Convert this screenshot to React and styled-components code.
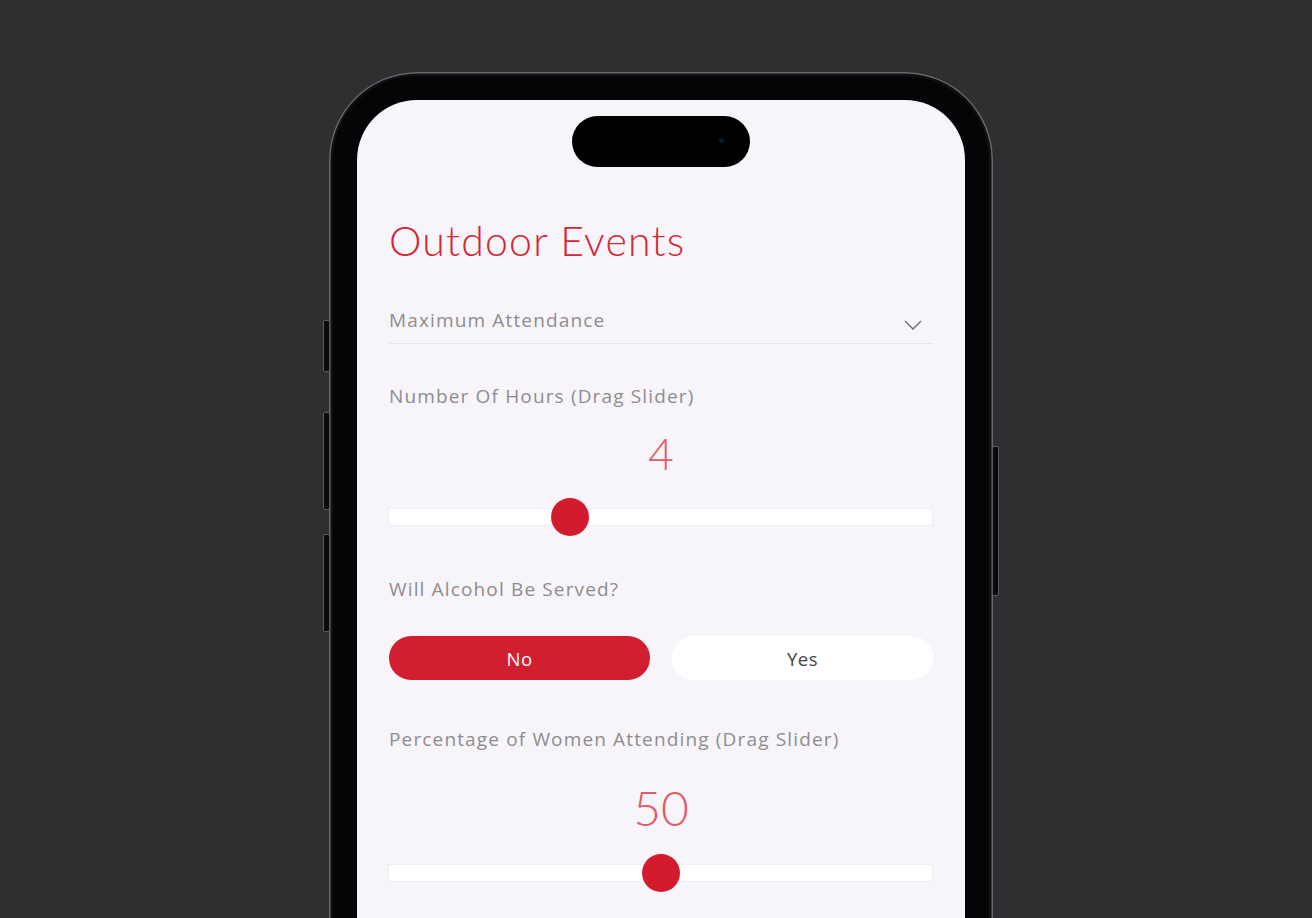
import React from "react";
import styled, { createGlobalStyle } from "styled-components";

const Global = createGlobalStyle`
  html, body { margin: 0; padding: 0; }
  body {
    background: #302e31;
    width: 1312px;
    height: 918px;
    overflow: hidden;
    font-family: "Open Sans", "Lato", sans-serif;
  }
`;

const Page = styled.div`
  display: flex;
  justify-content: center;
  padding-top: 72px;
  padding-left: 10px;
  height: 918px;
  box-sizing: border-box;
`;

const Phone = styled.div`
  position: relative;
  width: 664px;
  height: 980px;
  box-sizing: border-box;
  padding: 28px 28px 0 28px;
  border-radius: 88px;
  background: #050507;
  box-shadow: inset 0 0 0 1.5px #6a686c, inset 0 0 0 4px #111113;
`;

const SideButton = styled.div`
  position: absolute;
  top: ${(p) => p.$top}px;
  height: ${(p) => p.$h}px;
  width: 5px;
  ${(p) => (p.$right ? "right: -6px;" : "left: -6px;")}
  background: #0a0a0c;
  border: 1px solid #5c5a5e;
  border-radius: 2px;
`;

const Screen = styled.div`
  width: 608px;
  height: 100%;
  border-radius: 60px 60px 0 0;
  background: #f7f5f9;
  display: flex;
  flex-direction: column;
  align-items: center;
  padding-top: 16px;
  box-sizing: border-box;
`;

const Island = styled.div`
  width: 178px;
  height: 51px;
  border-radius: 26px;
  background: #000;
  position: relative;
  &::after {
    content: "";
    position: absolute;
    right: 26px;
    top: 22px;
    width: 5px;
    height: 5px;
    border-radius: 50%;
    background: #0d1a2c;
  }
`;

const Content = styled.div`
  align-self: stretch;
  padding: 0 32px;
  display: flex;
  flex-direction: column;
`;

const Title = styled.h1`
  margin: 50px 0 0 0;
  font-family: "Lato", sans-serif;
  font-weight: 300;
  font-size: 41px;
  line-height: 48px;
  letter-spacing: 1.2px;
  color: #d62535;
`;

const Label = styled.div`
  font-family: "Open Sans", "Lato", sans-serif;
  font-weight: 400;
  font-size: 19px;
  line-height: 24px;
  letter-spacing: 1.15px;
  color: #8e8c90;
  margin-top: ${(p) => p.$mt || 0}px;
`;

const Select = styled.div`
  display: flex;
  justify-content: space-between;
  align-items: flex-end;
  margin-top: 43px;
  padding-bottom: 11px;
  border-bottom: 1.5px solid #e7e5ea;
`;

const Chevron = styled.svg`
  width: 18px;
  height: 10px;
  margin-right: 11px;
  margin-bottom: 2px;
`;

const Value = styled.div`
  text-align: center;
  font-family: "Lato", sans-serif;
  font-weight: 300;
  font-size: ${(p) => p.$size}px;
  line-height: 48px;
  color: #e55a66;
  margin-top: ${(p) => p.$mt}px;
`;

const Track = styled.div`
  position: relative;
  height: 16px;
  background: #ffffff;
  box-shadow: 0 0 0 1px #efedf1;
  margin-top: ${(p) => p.$mt}px;
  margin-right: 1px;
`;

const Thumb = styled.div`
  position: absolute;
  top: 50%;
  width: 38px;
  height: 38px;
  border-radius: 50%;
  background: #d21c2d;
  transform: translate(-50%, -50%);
`;

const Toggle = styled.div`
  display: grid;
  grid-template-columns: 1fr 1fr;
  gap: 22px;
  margin-top: 35px;
`;

const Option = styled.div`
  height: 44px;
  border-radius: 22px;
  display: flex;
  align-items: center;
  justify-content: center;
  font-family: "Open Sans", sans-serif;
  font-size: 18.5px;
  font-weight: 400;
  letter-spacing: 0.5px;
  background: ${(p) => (p.$active ? "#d11f30" : "#ffffff")};
  color: ${(p) => (p.$active ? "#ffffff" : "#444246")};
`;

function Slider({ value, min, max, mt }) {
  const pct = ((value - min) / (max - min)) * 100;
  return (
    <Track $mt={mt}>
      <Thumb style={{ left: `${pct}%` }} />
    </Track>
  );
}

export default function App() {
  return (
    <>
      <Global />
      <Page>
        <Phone>
          <SideButton $top={248} $h={50} />
          <SideButton $top={340} $h={96} />
          <SideButton $top={462} $h={96} />
          <SideButton $right $top={374} $h={148} />
          <Screen>
            <Island />
            <Content>
              <Title>Outdoor Events</Title>
              <Select>
                <Label>Maximum Attendance</Label>
                <Chevron viewBox="0 0 18 10">
                  <polyline points="1,1 9,9 17,1" fill="none" stroke="#6e6c70" strokeWidth="1.4" />
                </Chevron>
              </Select>
              <Label $mt={40}>Number Of Hours (Drag Slider)</Label>
              <Value $size={44} $mt={21}>4</Value>
              <Slider value={4} min={1} max={10} mt={32} />
              <Label $mt={52}>Will Alcohol Be Served?</Label>
              <Toggle>
                <Option $active>No</Option>
                <Option>Yes</Option>
              </Toggle>
              <Label $mt={47}>Percentage of Women Attending (Drag Slider)</Label>
              <Value $size={48} $mt={33}>50</Value>
              <Slider value={50} min={0} max={100} mt={33} />
            </Content>
          </Screen>
        </Phone>
      </Page>
    </>
  );
}
